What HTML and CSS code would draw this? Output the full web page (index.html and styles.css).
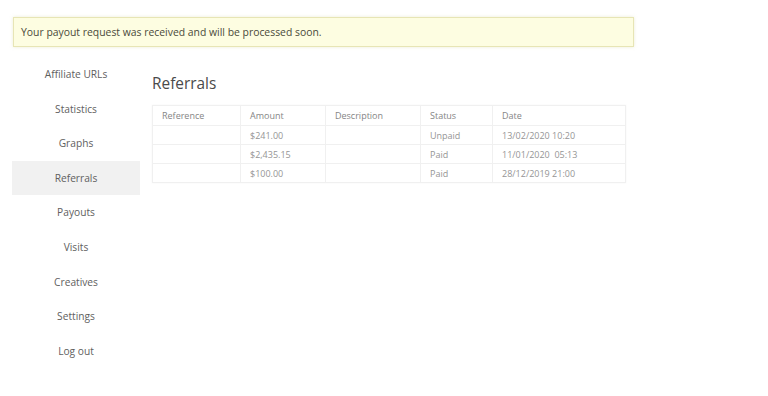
FILE: index.html
```html
<!DOCTYPE html>
<html lang="en">
<head>
    <meta charset="UTF-8">
    <meta name="viewport" content="width=device-width, initial-scale=1.0">
    <title>Affiliate area</title>
    <link rel="stylesheet" href="styles.css">
</head>
<body>
<div class="notice">Your payout request was received and will be processed soon.</div>

<div class="area">
    <nav class="menu">
        <a href="#">Affiliate URLs</a>
        <a href="#">Statistics</a>
        <a href="#">Graphs</a>
        <a href="#" class="active">Referrals</a>
        <a href="#">Payouts</a>
        <a href="#">Visits</a>
        <a href="#">Creatives</a>
        <a href="#">Settings</a>
        <a href="#">Log out</a>
    </nav>

    <main>
        <h3>Referrals</h3>
        <table class="referrals">
            <thead>
                <tr>
                    <th class="c1">Reference</th>
                    <th class="c2">Amount</th>
                    <th class="c3">Description</th>
                    <th class="c4">Status</th>
                    <th class="c5">Date</th>
                </tr>
            </thead>
            <tbody>
                <tr><td></td><td>$241.00</td><td></td><td>Unpaid</td><td>13/02/2020 10:20</td></tr>
                <tr><td></td><td>$2,435.15</td><td></td><td>Paid</td><td>11/01/2020&nbsp; 05:13</td></tr>
                <tr><td></td><td>$100.00</td><td></td><td>Paid</td><td>28/12/2019 21:00</td></tr>
            </tbody>
        </table>
    </main>
</div>
</body>
</html>
```
FILE: styles.css
```css
*{
    margin: 0;
    padding: 0;
    box-sizing: border-box;
}
body{
    font-family: "Open Sans", "Liberation Sans", sans-serif;
    background: #fff;
    color: #555;
}
.notice{
    margin: 17px 0 0 13px;
    width: 621px;
    height: 30px;
    padding: 0 7px;
    line-height: 28px;
    font-size: 10.4px;
    color: #4a4a3a;
    background: #fdfde1;
    border: 1px solid #e7e5b5;
    box-shadow: 0 0 3px rgba(220,220,170,0.5);
}
.area{
    display: flex;
    margin-top: 10px;
    padding-left: 12px;
}
.menu{
    width: 128px;
    display: flex;
    flex-direction: column;
}
.menu a{
    display: block;
    height: 34.6px;
    line-height: 34.6px;
    text-align: center;
    font-size: 10.2px;
    color: #606060;
    text-decoration: none;
}
.menu a.active{
    background: #f1f1f1;
}
main{
    padding: 16px 0 0 12px;
}
main h3{
    font-size: 15.4px;
    font-weight: 400;
    line-height: 22px;
    color: #4a4a4a;
    margin-bottom: 10px;
}
.referrals{
    border-collapse: collapse;
    font-size: 9px;
    color: #959595;
    box-shadow: 0 0 2px rgba(0,0,0,0.04);
}
.referrals th,
.referrals td{
    border: 1px solid #f0f0f0;
    text-align: left;
    padding: 0 9px;
    height: 19px;
    font-weight: 400;
}
.referrals th{
    height: 20px;
    color: #858585;
}
.c1{ width: 88px; }
.c2{ width: 85px; }
.c3{ width: 95px; }
.c4{ width: 72px; }
.c5{ width: 133px; }
```
